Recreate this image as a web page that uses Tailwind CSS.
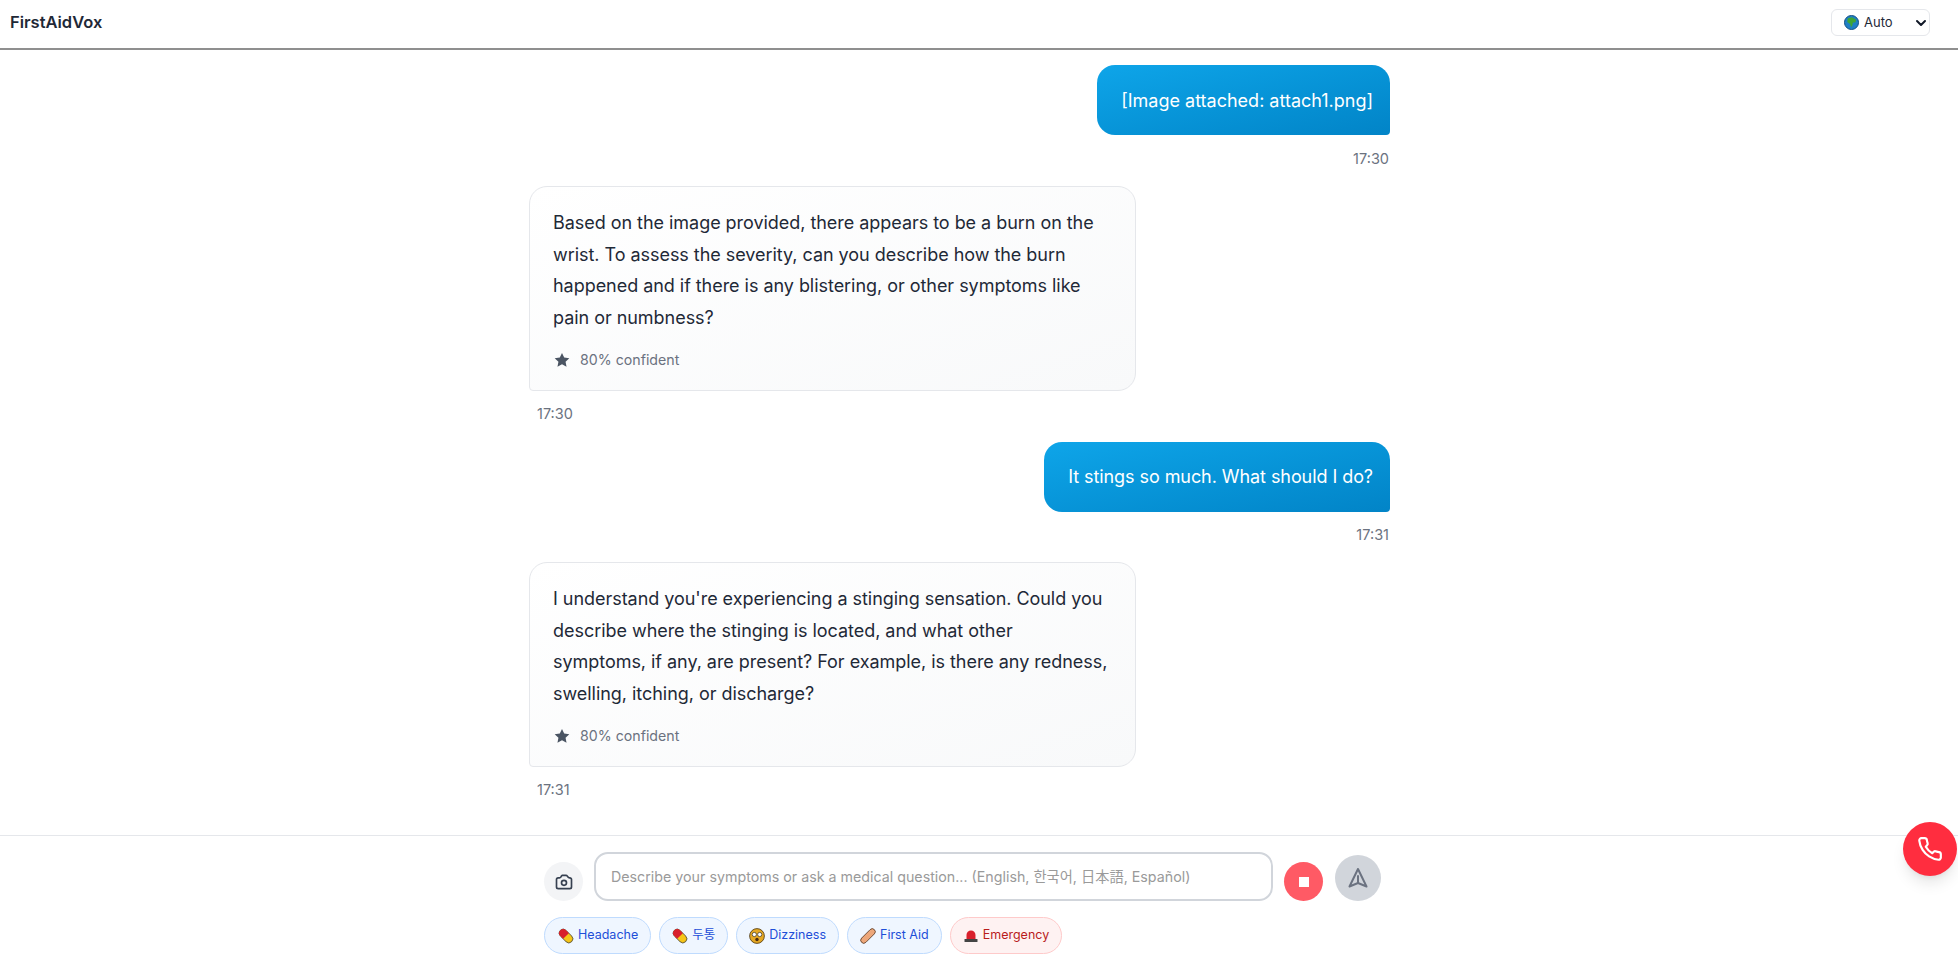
<!DOCTYPE html>
<html lang="en">
<head>
  <meta charset="UTF-8">
  <title>FirstAidVox</title>
  <script src="https://cdn.jsdelivr.net/npm/@tailwindcss/browser@4"></script>
</head>
<body class="bg-white font-['Inter','Noto_Sans_CJK_KR',sans-serif]">
  <div class="relative h-[963px] w-[1958px] overflow-hidden flex flex-col">
    <!-- Header -->
    <header class="h-[50px] shrink-0 flex items-center justify-between pl-[10px] pr-[28px] pb-[4px] border-b-2 border-[#8f8f8f]">
      <h1 class="text-[16.5px] font-semibold text-[#1f2937]">FirstAidVox</h1>
      <div class="w-[99px] h-[27px] flex items-center border border-[#e5e7eb] rounded-md pl-[12px] pr-[2px] pt-px text-[13px] text-[#1f2937]">
        <svg class="w-[15px] h-[15px] mr-[5px]" viewBox="0 0 16 16"><circle cx="8" cy="8" r="7.5" fill="#1f7fc4" stroke="#0f4c81"/><path d="M4 3.5 8.5 2.5 13 5 12 8 9.5 8 9 11 7.5 13 6.5 9.5 3.5 7.5Z" fill="#3fa535"/></svg>
        <span>Auto</span>
        <svg class="w-3 h-3 ml-auto" viewBox="0 0 12 12" fill="none" stroke="#111827" stroke-width="2" stroke-linecap="round" stroke-linejoin="round"><path d="M2 4 6 8 10 4"/></svg>
      </div>
    </header>

    <!-- Messages -->
    <main class="flex-1 ml-[530px] w-[860px] pt-[15px] flex flex-col">
      <div class="self-end bg-linear-to-br from-[#0ea5e9] to-[#0284c7] text-white text-lg leading-8 rounded-[18px] rounded-br-[4px] pl-6 pr-[17px] pt-[20px] h-[70px]">[Image attached: attach1.png]</div>
      <p class="self-end mt-[14px] mr-[1px] text-[14.5px] leading-5 text-[#6b7280]">17:30</p>

      <div class="mt-[17px] -ml-px w-[607px] h-[205px] border border-[#e5e7eb] rounded-[18px] rounded-bl-[4px] bg-linear-to-br from-white to-[#f8f9fa] pl-[23px] pr-[24px] pt-[20px] text-[#1f2937]">
        <p class="text-lg leading-[31.5px] tracking-[-0.04px]">Based on the image provided, there appears to be a burn on the wrist. To assess the severity, can you describe how the burn happened and if there is any blistering, or other symptoms like pain or numbness?</p>
        <div class="mt-[17px] flex items-center text-[14.2px] leading-5 text-[#6b7280]">
          <svg class="w-[18px] h-[18px] mr-[9px]" viewBox="0 0 24 24" fill="#4b5563"><path d="M12 2.5l2.95 6.2 6.8.9-5 4.7 1.3 6.7-6.05-3.3-6.05 3.3 1.3-6.7-5-4.7 6.8-.9z"/></svg>
          80% confident
        </div>
      </div>
      <p class="mt-[13px] ml-[7px] text-[14.5px] leading-5 text-[#6b7280]">17:30</p>

      <div class="self-end mt-[18px] bg-linear-to-br from-[#0ea5e9] to-[#0284c7] text-white text-lg leading-8 tracking-[-0.07px] rounded-[18px] rounded-br-[4px] pl-6 pr-[17px] pt-[19px] h-[70px]">It stings so much. What should I do?</div>
      <p class="self-end mt-[13px] mr-[1px] text-[14.5px] leading-5 text-[#6b7280]">17:31</p>

      <div class="mt-[17px] -ml-px w-[607px] h-[205px] border border-[#e5e7eb] rounded-[18px] rounded-bl-[4px] bg-linear-to-br from-white to-[#f8f9fa] pl-[23px] pr-[24px] pt-[20px] text-[#1f2937]">
        <p class="text-lg leading-[31.5px] tracking-[-0.04px]">I understand you're experiencing a stinging sensation. Could you describe where the stinging is located, and what other<br>symptoms, if any, are present? For example, is there any redness, swelling, itching, or discharge?</p>
        <div class="mt-[17px] flex items-center text-[14.2px] leading-5 text-[#6b7280]">
          <svg class="w-[18px] h-[18px] mr-[9px]" viewBox="0 0 24 24" fill="#4b5563"><path d="M12 2.5l2.95 6.2 6.8.9-5 4.7 1.3 6.7-6.05-3.3-6.05 3.3 1.3-6.7-5-4.7 6.8-.9z"/></svg>
          80% confident
        </div>
      </div>
      <p class="mt-[13px] ml-[7px] text-[14.5px] leading-5 text-[#6b7280]">17:31</p>
    </main>

    <!-- Composer -->
    <footer class="h-[128px] shrink-0 border-t border-[#e5e7eb]">
      <div class="ml-[544px] w-[837px]">
        <div class="pt-[16px] flex items-end">
          <button class="w-[39px] h-[39px] rounded-full bg-[#f3f4f6] flex items-center justify-center">
            <svg class="w-[20px] h-[20px]" viewBox="0 0 24 24" fill="none" stroke="#374151" stroke-width="2" stroke-linecap="round" stroke-linejoin="round"><path d="M3 9a2 2 0 0 1 2-2h1.5a2 2 0 0 0 1.7-.9l.8-1.2A2 2 0 0 1 9.7 4h4.6a2 2 0 0 1 1.7.9l.8 1.2a2 2 0 0 0 1.7.9H19a2 2 0 0 1 2 2v9a2 2 0 0 1-2 2H5a2 2 0 0 1-2-2z"/><circle cx="12" cy="13" r="3"/></svg>
          </button>
          <div class="ml-[11px] w-[679px] h-[49px] border-2 border-[#d1d5db] rounded-[14px] pl-[15px] flex items-center text-[14.25px] text-[#9a9a9a]">Describe your symptoms or ask a medical question... (English, 한국어, 日本語, Español)</div>
          <button class="ml-[11px] w-[39px] h-[39px] rounded-full bg-[#ff5a65] flex items-center justify-center">
            <span class="w-[10px] h-[10px] bg-white"></span>
          </button>
          <button class="ml-[12px] w-[46px] h-[46px] rounded-full bg-[#d1d5db] flex items-center justify-center">
            <svg class="w-[24px] h-[24px]" viewBox="0 0 24 24" fill="none" stroke="#6b7280" stroke-width="2" stroke-linecap="round" stroke-linejoin="round"><path d="M12 3 3.5 20.5 12 17l8.5 3.5z"/><path d="M12 10v7"/></svg>
          </button>
        </div>
        <div class="mt-[16px] flex gap-[8px] text-[12.5px]">
          <span class="h-[37px] pl-[13px] pr-[12px] rounded-full border border-[#bfdbfe] bg-[#eff6ff] text-[#1d4ed8] flex items-center gap-[4px]">
            <svg class="w-[16px] h-[16px]" viewBox="0 0 16 16"><g transform="rotate(45 8 8)"><rect x="0" y="4" width="16" height="8" rx="4" fill="#f5c518" stroke="#333" stroke-width=".7"/><path d="M8 4H4a4 4 0 0 0 0 8h4z" fill="#d8202c"/></g></svg>
            Headache
          </span>
          <span class="h-[37px] px-[12px] rounded-full border border-[#bfdbfe] bg-[#eff6ff] text-[#1d4ed8] flex items-center gap-[4px]">
            <svg class="w-[16px] h-[16px]" viewBox="0 0 16 16"><g transform="rotate(45 8 8)"><rect x="0" y="4" width="16" height="8" rx="4" fill="#f5c518" stroke="#333" stroke-width=".7"/><path d="M8 4H4a4 4 0 0 0 0 8h4z" fill="#d8202c"/></g></svg>
            두통
          </span>
          <span class="h-[37px] px-[12px] rounded-full border border-[#bfdbfe] bg-[#eff6ff] text-[#1d4ed8] flex items-center gap-[4px]">
            <svg class="w-[16px] h-[16px]" viewBox="0 0 16 16"><circle cx="8" cy="8" r="7.4" fill="#e5a823" stroke="#4a3510" stroke-width=".8"/><circle cx="5.3" cy="6.5" r="2.1" fill="#fff" stroke="#333" stroke-width=".7"/><circle cx="10.7" cy="6.5" r="2.1" fill="#fff" stroke="#333" stroke-width=".7"/><circle cx="8" cy="11.5" r="1.7" fill="#4a2a10"/></svg>
            Dizziness
          </span>
          <span class="h-[37px] px-[12px] rounded-full border border-[#bfdbfe] bg-[#eff6ff] text-[#1d4ed8] flex items-center gap-[4px]">
            <svg class="w-[16px] h-[16px]" viewBox="0 0 16 16"><g transform="rotate(-45 8 8)"><rect x="-1" y="5" width="18" height="6" rx="3" fill="#eda77a" stroke="#5a3a25" stroke-width=".8"/></g></svg>
            First Aid
          </span>
          <span class="h-[37px] px-[12px] rounded-full border border-[#fecaca] bg-[#fef2f2] text-[#b91c1c] flex items-center gap-[4px]">
            <svg class="w-[16px] h-[16px]" viewBox="0 0 16 16"><path d="M3.5 11V7a4.5 4.5 0 0 1 9 0v4z" fill="#d9202c"/><rect x="1.5" y="11" width="13" height="3" rx=".6" fill="#444"/></svg>
            Emergency
          </span>
        </div>
      </div>
    </footer>

    <!-- Emergency call -->
    <button class="absolute left-[1903px] top-[822px] w-[54px] h-[54px] rounded-full bg-[#ff2d3f] shadow-lg flex items-center justify-center">
      <svg class="w-[26px] h-[26px]" viewBox="0 0 24 24" fill="none" stroke="#fff" stroke-width="2" stroke-linecap="round" stroke-linejoin="round"><path d="M22 16.9v3a2 2 0 0 1-2.2 2 19.8 19.8 0 0 1-8.6-3.1 19.5 19.5 0 0 1-6-6A19.8 19.8 0 0 1 2.1 4.2 2 2 0 0 1 4.1 2h3a2 2 0 0 1 2 1.7c.1 1 .4 1.9.7 2.8a2 2 0 0 1-.5 2.1L8.1 9.9a16 16 0 0 0 6 6l1.3-1.3a2 2 0 0 1 2.1-.4c.9.3 1.8.6 2.8.7a2 2 0 0 1 1.7 2z"/></svg>
    </button>
  </div>
</body>
</html>
